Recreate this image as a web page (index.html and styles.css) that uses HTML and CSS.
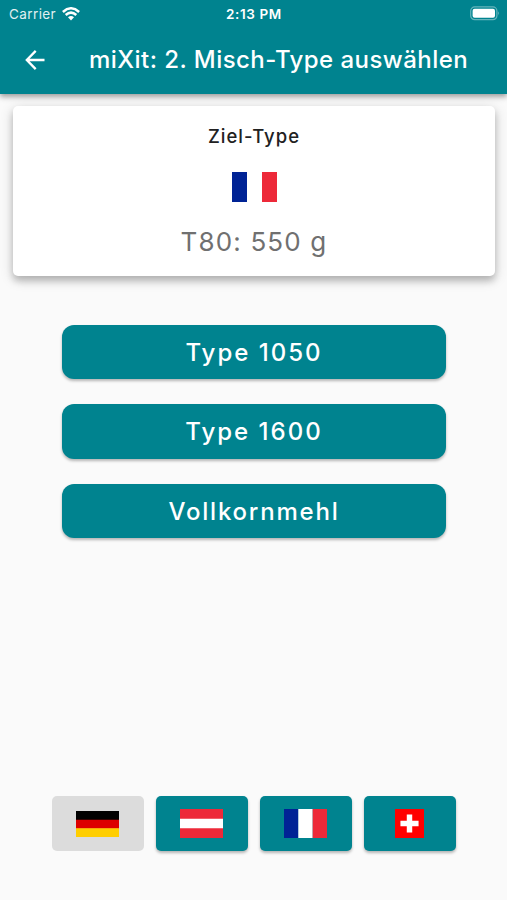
FILE: index.html
```html
<!DOCTYPE html>
<html lang="de">
<head>
<meta charset="utf-8">
<title>miXit</title>
<link rel="stylesheet" href="styles.css">
</head>
<body>
<header class="header">
  <div class="status">
    <div class="network"><span class="carrier">Carrier</span>
      <svg class="wifi" width="18" height="14" viewBox="0 0 18 14"><path d="M.9 5Q9-2.4 17.1 5M3.7 8Q9 3.2 14.3 8" fill="none" stroke="#fff" stroke-width="2.5"/><path d="M6 10.3Q9 7.8 12 10.3L9 13.4Z" fill="#fff"/></svg>
    </div>
    <span class="time">2:13 PM</span>
    <svg class="battery" width="31" height="15" viewBox="0 0 31 15"><rect x=".7" y=".9" width="26.2" height="12.8" rx="4" fill="none" stroke="#fff" stroke-opacity=".4" stroke-width="1.2"/><rect x="2.6" y="2.8" width="22.4" height="9" rx="2" fill="#fff"/><path d="M28.3 5.2q1.8 2 0 4.2z" fill="#fff" fill-opacity=".5"/></svg>
  </div>
  <div class="bar">
    <svg class="back" width="20" height="20" viewBox="0 0 20 20"><path d="M19.5 10H2.5M10.7.9L1.8 10l8.9 9.1" fill="none" stroke="#fff" stroke-width="2.3"/></svg>
    <h1 class="title">miXit: 2. Misch-Type auswählen</h1>
  </div>
</header>
<main class="main">
  <section class="card">
    <h2 class="label">Ziel-Type</h2>
    <svg class="target-flag" width="45" height="30" viewBox="0 0 45 30"><path fill="#002395" d="M0 0h15v30H0z"/><path fill="#fff" d="M15 0h15v30H15z"/><path fill="#ed2939" d="M30 0h15v30H30z"/></svg>
    <p class="amount">T80: 550 g</p>
  </section>
  <div class="types">
    <button class="type">Type 1050</button>
    <button class="type">Type 1600</button>
    <button class="type whole">Vollkornmehl</button>
  </div>
</main>
<nav class="countries">
  <button class="country selected" aria-label="Deutschland"><svg width="43" height="26" viewBox="0 0 43 26"><path d="M0 0h43v9H0z"/><path fill="#d00" d="M0 8.7h43v9H0z"/><path fill="#ffce00" d="M0 17.3h43V26H0z"/></svg></button>
  <button class="country" aria-label="Österreich"><svg width="43" height="29" viewBox="0 0 43 29"><path fill="#ed2939" d="M0 0h43v29H0z"/><path fill="#fff" d="M0 9.7h43v9.6H0z"/></svg></button>
  <button class="country" aria-label="Frankreich"><svg width="43" height="29" viewBox="0 0 43 29"><path fill="#002395" d="M0 0h14.5v29H0z"/><path fill="#fff" d="M14.3 0h14.4v29H14.3z"/><path fill="#ed2939" d="M28.7 0H43v29H28.7z"/></svg></button>
  <button class="country" aria-label="Schweiz"><svg width="29" height="29" viewBox="0 0 32 32"><path fill="red" d="M0 0h32v32H0z"/><path fill="#fff" d="M13 6h6v7h7v6h-7v7h-6v-7H6v-6h7z"/></svg></button>
</nav>
</body>
</html>
```

FILE: styles.css
```css
* { box-sizing: border-box; }
body {
  margin: 0;
  height: 900px;
  display: flex;
  flex-direction: column;
  background: #fafafa;
  font-family: Inter, sans-serif;
  overflow: hidden;
}
h1, h2, p { margin: 0; white-space: nowrap; }
button { border: 0; padding: 0; font-family: inherit; color: #fff; background: #00838f; }
svg { display: block; }
.header {
  height: 94px;
  background: #00838f;
  color: #fff;
  box-shadow: 0 2px 5px rgba(0, 0, 0, .3), 0 4px 6px rgba(0, 0, 0, .12);
}
.status {
  height: 27px;
  display: grid;
  grid-template-columns: 1fr auto 1fr;
  align-items: center;
  padding: 0 6px 0 9px;
}
.network { display: flex; align-items: center; gap: 6px; }
.carrier { font-size: 13.5px; letter-spacing: .4px; color: #e0f0f1; }
.time { font-size: 13.5px; font-weight: 600; letter-spacing: .6px; margin-right: 2px; }
.battery { justify-self: end; }
.bar { height: 65px; display: flex; align-items: center; padding-left: 25px; }
.back { margin-right: 44px; }
.title { font-size: 24px; font-weight: 500; letter-spacing: .45px; line-height: 30px; }
.card {
  height: 170px;
  margin: 12px 12px 0 13px;
  padding-top: 18px;
  display: flex;
  flex-direction: column;
  align-items: center;
  background: #fff;
  border-radius: 5px;
  box-shadow: 0 5px 7px rgba(0, 0, 0, .2), 0 3px 14px rgba(0, 0, 0, .16);
}
.label { font-size: 18.5px; line-height: 24px; font-weight: 500; letter-spacing: 1px; color: #212121; }
.target-flag { margin-top: 24px; }
.amount { margin: 24px 0 0; font-size: 26px; line-height: 32px; letter-spacing: 1.15px; color: #707070; }
.types { margin: 48.5px 61px 0 62px; display: flex; flex-direction: column; gap: 25px; }
.type {
  height: 54.5px;
  padding-top: 1px;
  border-radius: 12px;
  font-size: 24px;
  font-weight: 500;
  letter-spacing: 2px;
  box-shadow: 0 2px 3px rgba(0, 0, 0, .28);
}
.whole { letter-spacing: 1.8px; }
.countries { margin: auto 51px 49px 52px; display: flex; gap: 12px; }
.country {
  flex: 1;
  height: 55px;
  display: flex;
  align-items: center;
  justify-content: center;
  padding-right: 1px;
  border-radius: 5px;
  box-shadow: 0 2px 3px rgba(0, 0, 0, .28);
}
.selected { background: #dcdcdc; box-shadow: none; }
```
